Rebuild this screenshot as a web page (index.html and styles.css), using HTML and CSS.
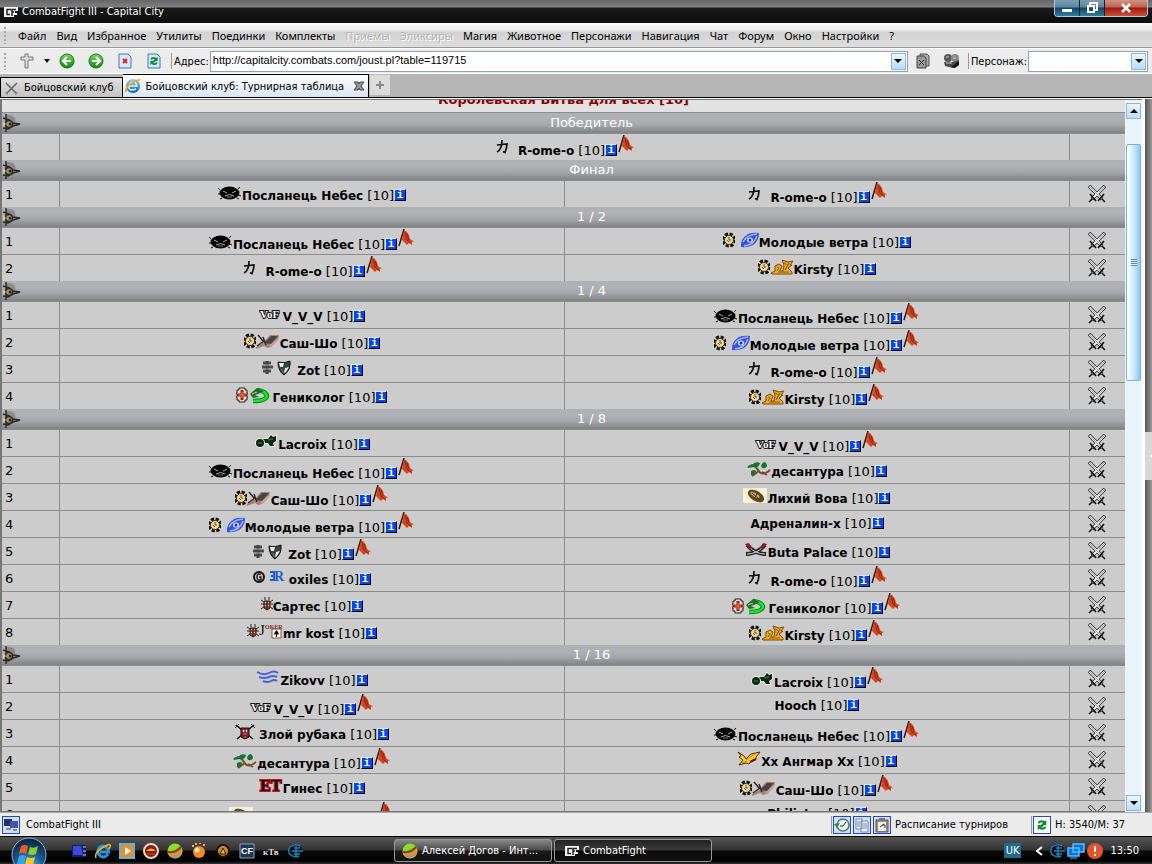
FILE: index.html
```
<!DOCTYPE html>
<html lang="ru">

<head>
  <meta charset="UTF-8" />
  <title>CombatFight III - Capital City</title>
  <link rel="stylesheet" href="styles.css">
</head>

<body>
  <svg class="gradients" aria-hidden="true">
    <defs>
      <linearGradient id="g-green" x1="0" y1="0" x2="0" y2="1"><stop offset="0" stop-color="#7ed957"/><stop offset="1" stop-color="#0c8a12"/></linearGradient>
      <linearGradient id="g-blue" x1="0" y1="0" x2="0" y2="1"><stop offset="0" stop-color="#8fd0f5"/><stop offset="1" stop-color="#0a5fb8"/></linearGradient>
      <radialGradient id="g-orb" cx=".5" cy=".85" r=".8"><stop offset="0" stop-color="#3fc4ee"/><stop offset=".5" stop-color="#1c5c96"/><stop offset="1" stop-color="#0b2440"/></radialGradient>
    </defs>
  </svg>

  <svg class="sprite" aria-hidden="true">
    <!-- clans -->
    <symbol id="c-sad" viewBox="0 0 24 17">
      <ellipse cx="11.500" cy="8" rx="10" ry="6.500" fill="#050505"/>
      <path d="M2 5L0 3M20 4l2-2M0 9h3M20 10l3 1M4 13l-2 1M19 13l2 1" stroke="#050505"/>
      <path d="M5 6l4 2M18 6l-4 2M7 11q4.500-3 9 0" fill="none" stroke="#aaa"/>
      <path d="M9 12h5" stroke="#777"/>
    </symbol>
    <symbol id="c-ka" viewBox="0 0 24 17">
      <path d="M3 5l10-1c0 3-1 6-2 8.500l-2-1M8 0c0 6-1 10-5 12" fill="none" stroke="#111" stroke-width="1.700"/>
    </symbol>
    <symbol id="c-vof" viewBox="0 0 24 17">
      <text x="1" y="12" font-family="Liberation Serif" font-weight="bold" font-size="11" fill="#fff" stroke="#111" stroke-width="2" paint-order="stroke">VoF</text>
    </symbol>
    <symbol id="c-feather" viewBox="0 0 24 17">
      <path d="M0 14l7-4 7-8 9 0-1 5-7 7-4 1-3-2-8 3z" fill="#a88078"/>
      <path d="M8 10l7-7 7 0-7 8z" fill="#454545"/>
      <path d="M2 2l5 6M1 13l7-5M7 4l3 8" stroke="#3a2a26" stroke-width="1.500"/>
      <path d="M14 13l8-7" stroke="#d2a69c" stroke-width="1.500"/>
    </symbol>
    <symbol id="c-shield" viewBox="0 0 24 17">
      <path d="M5 2q6 2 12-1 1 9-6 14-6-4-6-13z" fill="#34443c" stroke="#111"/>
      <path d="M6 3l5 0-1 4H7zM12 8l4-1-3 5-2 1z" fill="#eee"/><path d="M8 9l3 4" stroke="#8f6aa0"/>
    </symbol>
    <symbol id="c-snake" viewBox="0 0 24 17">
      <path d="M5 14q13 0 14-5-1-5-10-6" fill="none" stroke="#0a8a14" stroke-width="4.500"/>
      <path d="M5 14q13 0 14-5-1-5-10-6" fill="none" stroke="#18e628" stroke-width="2.500"/>
      <path d="M2 7l7-6 7 3-6 3-3 1 4 2-6 1z" fill="#17702c"/>
      <path d="M4 7l5-2" stroke="#e8d040"/>
    </symbol>
    <symbol id="c-disc" viewBox="0 0 24 17">
      <path d="M6 15Q5 7 13 2q5-2 11-1 0 8-6 12-6 3-12 2z" fill="#3454e6"/>
      <path d="M8 10Q11 3 22 2M9 14Q19 13 22 4" fill="none" stroke="#a9b8ff" stroke-width="1.500"/>
      <ellipse cx="15" cy="8" rx="3" ry="2.500" fill="#dfe7ff"/><circle cx="15" cy="8" r="1.500" fill="#1c2db0"/>
    </symbol>
    <symbol id="c-griffon" viewBox="0 0 24 17">
      <path d="M1 14l4-2 0-5 4-2 3 2-2 5 3 0 1-6-2-5 6 2 5-1-3 4 2 0-4 3 4 4v2H2z" fill="#edaa1c" stroke="#7a4a08"/>
      <path d="M7 8l2 1-2 3M14 4l4 2-3 5M8 13h11M19 4l-4 7" stroke="#9a5c0c" fill="none"/>
    </symbol>
    <symbol id="c-cannon" viewBox="0 0 24 17">
      <g stroke="#e4efe2" stroke-width="2" paint-order="stroke" fill="#0d2812">
        <path d="M8 5h6l3-4 2 2 3-1v5l-3 2 1 3-4 0-2-3H9z"/><circle cx="6" cy="9" r="4"/>
      </g>
      <path d="M4 9h4M14 6l5-1" stroke="#2f6a38" stroke-width="1.500"/>
    </symbol>
    <symbol id="c-leaf" viewBox="0 0 24 17">
      <path d="M1 6q6-4 10 3t12 0M12 10l-7 5M15 11l5 3" fill="none" stroke="#7b4a2c" stroke-width="2"/>
      <path d="M5 4q3-4 8-2-1 5-6 4zM14 5q1-4 4-4 4 4 0 6-3 1-4-2zM4 10q4-2 5 0-1 5-5 4zM0 7l5-4 2 3z" fill="#12733b"/>
    </symbol>
    <symbol id="c-egg" viewBox="0 0 24 17">
      <path d="M0 0h24v15H0z" fill="#f5f0d8"/>
      <ellipse cx="13" cy="8" rx="9" ry="5" transform="rotate(32 13 8)" fill="#5f481c"/>
      <ellipse cx="12" cy="7" rx="5" ry="2" transform="rotate(32 12 7)" fill="#c9b06a"/>
      <path d="M9 5l7 6M15 4l-4 7" stroke="#3b2a0c"/>
    </symbol>
    <symbol id="c-sabres" viewBox="0 0 24 17">
      <path d="M3 3q8 9 19 9M21 3Q13 12 2 12" fill="none" stroke="#222" stroke-width="4"/>
      <path d="M5 5q7 7 16 7M19 5Q12 12 3 12" fill="none" stroke="#ddd"/>
      <path d="M1 2l4-1 3 5-3 1zM23 2l-4-1-3 5 3 1z" fill="#8a1c25"/>
    </symbol>
    <symbol id="c-r" viewBox="0 0 24 17">
      <text x="9" y="12" font-family="Liberation Serif" font-weight="bold" font-size="14" fill="#1e5fd0">R</text>
      <path d="M5 3h5M6 7h4M5 11h5M9 3v8" stroke="#1e5fd0" stroke-width="2"/>
    </symbol>
    <symbol id="c-joker" viewBox="0 0 24 17">
      <path d="M13 6h9v9h-9z" fill="#fff" stroke="#8a4a3a"/><path d="M17.500 7q5 6 0 4-5 2 0-4zM17 11h1v3h-1z" fill="#111"/>
      <text x="0" y="12" font-family="Liberation Serif" font-size="15" fill="#111">J</text>
      <text x="6" y="6" font-family="Liberation Serif" font-weight="bold" font-size="6" fill="#7c2d20">OKER</text>
    </symbol>
    <symbol id="c-wing" viewBox="0 0 24 17">
      <path d="M1 2q7 4 12 1t9 0M3 7q6 2 10 0t8 0M7 11q5 2 8 0t6 0" fill="none" stroke="#4a63d8" stroke-width="2"/>
    </symbol>
    <symbol id="c-bug" viewBox="0 0 24 17">
      <path d="M1 1l17 14M19 1L2 15" stroke="#111" stroke-width="1.500"/>
      <path d="M0 4l4-4M20 4l-4-4" stroke="#333"/>
      <path d="M6 4h8v9l-4 2-4-2z" fill="#8d1626" stroke="#111"/><path d="M8 6h1v2H8zM11 6h1v2h-1zM8 10h4M10 12v2" fill="#eee" stroke="#ddd" stroke-width=".5"/>
    </symbol>
    <symbol id="c-et" viewBox="0 0 24 17">
      <text x="1" y="13" font-family="Liberation Serif" font-weight="bold" font-size="16" fill="#111" stroke="#c0161c" stroke-width="2" paint-order="stroke">ET</text>
    </symbol>
    <symbol id="c-hawk" viewBox="0 0 24 17">
      <path d="M1 1l6 4 2 3 5-5 9-2-4 5 0 2-5 2-2 3-3-1-7 2 4-5-4-3 2-1z" fill="#ffd21c" stroke="#5a2504"/>
      <path d="M9 9l9-6M5 12l5-2" stroke="#c77a08"/><path d="M13 11l6-3" stroke="#6a1408" stroke-width="2"/>
    </symbol>

    <!-- alignments -->
    <symbol id="a-clock" viewBox="0 0 12 17">
      <circle cx="6" cy="8" r="5.500" fill="none" stroke="#111" stroke-width="4" stroke-dasharray="2.900 1.400"/>
      <circle cx="6" cy="8" r="4.500" fill="#ead9a6" stroke="#4e3810"/>
      <path d="M6 5v3h2M4 8l2 2" fill="none" stroke="#6b4e1a"/>
    </symbol>
    <symbol id="a-grey" viewBox="0 0 12 17">
      <path d="M2 3h8M1 7h11M2 11h8" stroke="#4a4a4a" stroke-width="3"/>
      <path d="M6 1v13" stroke="#444" stroke-width="3"/><path d="M3 5h7M3 9h7" stroke="#999"/>
    </symbol>
    <symbol id="a-cross" viewBox="0 0 12 17">
      <path d="M3 1h6v2h2v3h1v4h-1v3H9v2H3v-2H1v-3H0V6h1V3h2z" fill="#e8d8d0" stroke="#222"/>
      <path d="M6 3v10M1 8h10" stroke="#a4201a" stroke-width="3"/><path d="M6 5v6M3 8h6" stroke="#f08a2a"/>
    </symbol>
    <symbol id="a-g" viewBox="0 0 12 17">
      <circle cx="6" cy="8" r="5" fill="#ccc" stroke="#111" stroke-width="2"/>
      <path d="M8 5.500q-4-2-4 2.500t4 2.500V8H6" fill="none" stroke="#222" stroke-width="1.500"/>
    </symbol>
    <symbol id="a-beetle" viewBox="0 0 12 17">
      <path d="M0 4l3 2M12 4L9 6M0 8h12M0 13l3-2M12 13l-3-2M4 1v3M8 1v3" stroke="#222"/>
      <path d="M3 5h6v7l-3 2-3-2z" fill="#b0401c" stroke="#222"/><path d="M4.500 6v6M7.500 6v6" stroke="#fff" stroke-dasharray="1 2"/><path d="M6 5v9" stroke="#222"/>
    </symbol>

    <symbol id="flag" viewBox="0 0 18 20">
      <path d="M7 0L2 17" stroke="#2d1a12" stroke-width="1.500"/>
      <path d="M7 1q3 1 5 5l1 4q2 2 4 2l-2 1v3l-3-2-2 2-2-2-3-3z" fill="#d8431f"/>
      <path d="M8 3l2 8 4 3M10 5l2 6" fill="none" stroke="#8d2410"/>
    </symbol>
    <symbol id="swords" viewBox="0 0 18 18">
      <path d="M1 1l13 13M17 1L4 14" stroke="#222" stroke-width="3.600"/>
      <path d="M1.500 1.500l12 12M16.500 1.500l-12 12" stroke="#f2f2f2" stroke-width="2.200"/>
      <path d="M2 2l11 11M16 2l-5 5" stroke="#777" stroke-width=".6"/>
      <path d="M2 9l6 7M16 9l-6 7M1 17l3-3M17 17l-3-3" stroke="#111" stroke-width="1.600"/>
    </symbol>
    <symbol id="ornament" viewBox="0 0 20 20">
      <path d="M4 2q11-1 9 8-2 7-9 7z" fill="#8c8a86"/>
      <path d="M1 5l6 2 4 3 7 1-7 2-5 3-5-1M4 1v18" fill="none" stroke="#2c2a24" stroke-width="1.500"/>
      <circle cx="7" cy="11" r="3.500" fill="#a39a78" stroke="#2b281f" stroke-width="1.500"/><circle cx="8" cy="11" r="1.500" fill="#2b281f"/>
      <path d="M1 9l3 2-3 3z" fill="#d9cf9c"/>
    </symbol>

    <!-- program icons -->
    <symbol id="cf" viewBox="0 0 14 12">
      <path d="M0 1h14v4h-3v2h2v2h-3v2H0z" fill="#f4f4f4"/>
      <path d="M7 3.500H3v5h3M8 10V3.500h4M8 6h2" fill="none" stroke="#222" stroke-width="1.500"/>
    </symbol>
    <symbol id="ie" viewBox="0 0 16 16">
      <path d="M13 11q-2 3-5 3-5-1-5-6 1-5 5-5 5 0 5.500 6H5" fill="none" stroke="#2a94e4" stroke-width="3"/>
      <path d="M1 15Q-1 10 7 5t8-3q1 1-1 4" fill="none" stroke="#f0b429" stroke-width="1.500"/>
    </symbol>
    <symbol id="ball" viewBox="0 0 16 16">
      <circle cx="8" cy="8" r="7.500" fill="#8edb2c"/>
      <path d="M.5 9q8 1 14-5 2 5-1 9-5 4-10 1-3-2-3-5z" fill="#f1931d"/>
      <path d="M1 9q8 1 13-5" fill="none" stroke="#6a4b12" stroke-width="2"/><path d="M2 12q6 2 12-3-1 5-6 6-4 0-6-3z" fill="#999"/>
    </symbol>
    <symbol id="refresh" viewBox="0 0 14 14">
      <path d="M3 5q1-3 5-2l2 1-4 5M11 9q-1 3-5 2l-2-1" fill="none" stroke="#0b8a2c" stroke-width="2.500"/>
      <path d="M12 1v6H7zM2 13V7h5z" fill="#0b8a2c"/>
    </symbol>
    <symbol id="net" viewBox="0 0 16 16">
      <circle cx="8" cy="8" r="7" fill="#050b12"/>
      <path d="M13 3Q8 0 3 4q-3 5 1 8 4 3 8 1M5 8h11M7 5h6M7 11h6M9 3v10" fill="none" stroke="#1f7fb5" stroke-width="1.500"/>
    </symbol>
  </svg>

  <header class="titlebar">
    <svg class="title-icon"><use href="#cf"/></svg>
    <h1>CombatFight III - Capital City</h1>
    <div class="win-buttons">
      <button aria-label="Свернуть"><svg width="12" height="12"><path d="M1 7h10v3H1z" fill="#fff"/></svg></button>
      <button aria-label="Восстановить"><svg width="12" height="12"><path d="M4 3V1h7v7H9M2 4h6v6H2z" fill="none" stroke="#fff" stroke-width="2"/></svg></button>
      <button class="close" aria-label="Закрыть"><svg width="12" height="12"><path d="M2 2l8 8M10 2l-8 8" stroke="#fff" stroke-width="2.500"/></svg></button>
    </div>
  </header>

  <nav class="menubar">
    <span class="grip"></span>
    <button>Файл</button>
    <button>Вид</button>
    <button>Избранное</button>
    <button>Утилиты</button>
    <button>Поединки</button>
    <button>Комплекты</button>
    <button disabled>Приёмы</button>
    <button disabled>Эликсиры</button>
    <button>Магия</button>
    <button>Животное</button>
    <button>Персонажи</button>
    <button>Навигация</button>
    <button>Чат</button>
    <button>Форум</button>
    <button>Окно</button>
    <button>Настройки</button>
    <button>?</button>
  </nav>

  <div class="toolbar">
    <span class="grip"></span>
    <div class="tools">
      <button class="cross" aria-label="Бой"><svg width="14" height="16"><path d="M5 1h3v3h5v3H8v8H5V7H1V4h4z" fill="#ddd" stroke="#777"/></svg><svg width="6" height="4"><path d="M0 0h6L3 4z" fill="#111"/></svg></button>
      <button aria-label="Назад"><svg width="16" height="16"><circle cx="8" cy="8" r="7" fill="url(#g-green)" stroke="#0c7a14"/><path d="M12 8H5M8 4L4 8l4 4" fill="none" stroke="#fff" stroke-width="2"/></svg></button>
      <button aria-label="Вперёд"><svg width="16" height="16"><circle cx="8" cy="8" r="7" fill="url(#g-green)" stroke="#0c7a14"/><path d="M4 8h7M8 4l4 4-4 4" fill="none" stroke="#fff" stroke-width="2"/></svg></button>
      <button aria-label="Остановить"><svg width="16" height="16"><path d="M2 1h9l3 3v11H2z" fill="#d7e8fb" stroke="#3d78bf"/><path d="M6 6l4 4M10 6l-4 4" stroke="#e02418" stroke-width="2"/></svg></button>
      <button aria-label="Обновить"><svg width="16" height="16"><path d="M2 1h9l3 3v11H2z" fill="#d7e8fb" stroke="#3d78bf"/><svg x="3" y="3" width="10" height="10"><use href="#refresh"/></svg></svg></button>
    </div>
    <label for="address">Адрес:</label>
    <div class="combo address">
      <input id="address" type="text" value="http://capitalcity.combats.com/joust.pl?table=119715">
      <button class="drop" aria-label="История адресов"></button>
    </div>
    <div class="tools small">
      <button aria-label="Закрыть все"><svg width="14" height="16"><path d="M4 1h7l2 2v10H4z" fill="#aaa" stroke="#555"/><path d="M1 3h7l2 2v10H1z" fill="#999" stroke="#444"/><path d="M3 7l5 5M8 7l-5 5" stroke="#333"/></svg></button>
      <button aria-label="Друзья"><svg width="17" height="16"><circle cx="5" cy="5" r="4" fill="#555"/><circle cx="12" cy="5" r="4" fill="#888"/><path d="M1 9h9l6-2v4l-6 4-8-2z" fill="#4a4a4a"/><path d="M8 14l8-6v4l-4 3z" fill="#111"/><path d="M3 4h3M10 5h3M3 10h6" stroke="#ccc"/></svg></button>
    </div>
    <label for="char">Персонаж:</label>
    <div class="combo char">
      <select id="char"><option></option></select>
      <span class="drop"></span>
    </div>
  </div>

  <div class="tabs" role="tablist">
    <button class="tab" role="tab"><svg width="13" height="14"><path d="M1 2l11 11M12 2L1 13" stroke="#666" stroke-width="1.500"/><path d="M0 11l3 3M13 11l-3 3" stroke="#999"/></svg>Бойцовский клуб</button>
    <button class="tab active" role="tab" aria-selected="true"><svg width="16" height="16"><circle cx="8" cy="8" r="7" fill="url(#g-blue)"/><path d="M4 8h8q-1-4-4-4t-4 4 4 4l3-1" fill="none" stroke="#e4f4ff" stroke-width="1.500"/><path d="M1 14Q0 9 7 5t8-3" fill="none" stroke="#e9a92a" stroke-width="2"/></svg>Бойцовский клуб: Турнирная таблица<svg class="tab-close" width="12" height="10"><path d="M1 1h4l1 2 1-2h4L8 5l3 4H7L6 7 5 9H1l3-4z" fill="#999" stroke="#444"/></svg></button>
    <button class="new-tab" aria-label="Новая вкладка"><svg width="10" height="10"><path d="M5 1v8M1 5h8" stroke="#888" stroke-width="2"/></svg></button>
  </div>

  <main class="view">
    <div class="page">
      <h3>Королевская Битва для всех [10]</h3>
      <table>
        <colgroup><col class="num"><col><col><col class="log"></colgroup>
        <tr class="stage"><th colspan="4"><svg class="orn"><use href="#ornament"/></svg>Победитель</th></tr>
        <tr>
          <td>1</td>
          <td colspan="2"><svg class="clan"><use href="#c-ka"/></svg><b>R-ome-o</b> [10]<a class="inf" href="#">i</a><svg class="flag"><use href="#flag"/></svg></td>
          <td></td>
        </tr>
        <tr class="stage"><th colspan="4"><svg class="orn"><use href="#ornament"/></svg>Финал</th></tr>
        <tr>
          <td>1</td>
          <td><svg class="clan"><use href="#c-sad"/></svg><b>Посланець Небес</b> [10]<a class="inf" href="#">i</a></td>
          <td><svg class="clan"><use href="#c-ka"/></svg><b>R-ome-o</b> [10]<a class="inf" href="#">i</a><svg class="flag"><use href="#flag"/></svg></td>
          <td><svg class="swords"><use href="#swords"/></svg></td>
        </tr>
        <tr class="stage"><th colspan="4"><svg class="orn"><use href="#ornament"/></svg>1 / 2</th></tr>
        <tr>
          <td>1</td>
          <td><svg class="clan"><use href="#c-sad"/></svg><b>Посланець Небес</b> [10]<a class="inf" href="#">i</a><svg class="flag"><use href="#flag"/></svg></td>
          <td><svg class="align"><use href="#a-clock"/></svg><svg class="clan"><use href="#c-disc"/></svg><b>Молодые ветра</b> [10]<a class="inf" href="#">i</a></td>
          <td><svg class="swords"><use href="#swords"/></svg></td>
        </tr>
        <tr>
          <td>2</td>
          <td><svg class="clan"><use href="#c-ka"/></svg><b>R-ome-o</b> [10]<a class="inf" href="#">i</a><svg class="flag"><use href="#flag"/></svg></td>
          <td><svg class="align"><use href="#a-clock"/></svg><svg class="clan"><use href="#c-griffon"/></svg><b>Kirsty</b> [10]<a class="inf" href="#">i</a></td>
          <td><svg class="swords"><use href="#swords"/></svg></td>
        </tr>
        <tr class="stage"><th colspan="4"><svg class="orn"><use href="#ornament"/></svg>1 / 4</th></tr>
        <tr>
          <td>1</td>
          <td><svg class="clan"><use href="#c-vof"/></svg><b>V_V_V</b> [10]<a class="inf" href="#">i</a></td>
          <td><svg class="clan"><use href="#c-sad"/></svg><b>Посланець Небес</b> [10]<a class="inf" href="#">i</a><svg class="flag"><use href="#flag"/></svg></td>
          <td><svg class="swords"><use href="#swords"/></svg></td>
        </tr>
        <tr>
          <td>2</td>
          <td><svg class="align"><use href="#a-clock"/></svg><svg class="clan"><use href="#c-feather"/></svg><b>Саш-Шо</b> [10]<a class="inf" href="#">i</a></td>
          <td><svg class="align"><use href="#a-clock"/></svg><svg class="clan"><use href="#c-disc"/></svg><b>Молодые ветра</b> [10]<a class="inf" href="#">i</a><svg class="flag"><use href="#flag"/></svg></td>
          <td><svg class="swords"><use href="#swords"/></svg></td>
        </tr>
        <tr>
          <td>3</td>
          <td><svg class="align"><use href="#a-grey"/></svg><svg class="clan"><use href="#c-shield"/></svg><b>Zot</b> [10]<a class="inf" href="#">i</a></td>
          <td><svg class="clan"><use href="#c-ka"/></svg><b>R-ome-o</b> [10]<a class="inf" href="#">i</a><svg class="flag"><use href="#flag"/></svg></td>
          <td><svg class="swords"><use href="#swords"/></svg></td>
        </tr>
        <tr>
          <td>4</td>
          <td><svg class="align"><use href="#a-cross"/></svg><svg class="clan"><use href="#c-snake"/></svg><b>Гениколог</b> [10]<a class="inf" href="#">i</a></td>
          <td><svg class="align"><use href="#a-clock"/></svg><svg class="clan"><use href="#c-griffon"/></svg><b>Kirsty</b> [10]<a class="inf" href="#">i</a><svg class="flag"><use href="#flag"/></svg></td>
          <td><svg class="swords"><use href="#swords"/></svg></td>
        </tr>
        <tr class="stage"><th colspan="4"><svg class="orn"><use href="#ornament"/></svg>1 / 8</th></tr>
        <tr>
          <td>1</td>
          <td><svg class="clan"><use href="#c-cannon"/></svg><b>Lacroix</b> [10]<a class="inf" href="#">i</a></td>
          <td><svg class="clan"><use href="#c-vof"/></svg><b>V_V_V</b> [10]<a class="inf" href="#">i</a><svg class="flag"><use href="#flag"/></svg></td>
          <td><svg class="swords"><use href="#swords"/></svg></td>
        </tr>
        <tr>
          <td>2</td>
          <td><svg class="clan"><use href="#c-sad"/></svg><b>Посланець Небес</b> [10]<a class="inf" href="#">i</a><svg class="flag"><use href="#flag"/></svg></td>
          <td><svg class="clan"><use href="#c-leaf"/></svg><b>десантура</b> [10]<a class="inf" href="#">i</a></td>
          <td><svg class="swords"><use href="#swords"/></svg></td>
        </tr>
        <tr>
          <td>3</td>
          <td><svg class="align"><use href="#a-clock"/></svg><svg class="clan"><use href="#c-feather"/></svg><b>Саш-Шо</b> [10]<a class="inf" href="#">i</a><svg class="flag"><use href="#flag"/></svg></td>
          <td><svg class="clan"><use href="#c-egg"/></svg><b>Лихий Вова</b> [10]<a class="inf" href="#">i</a></td>
          <td><svg class="swords"><use href="#swords"/></svg></td>
        </tr>
        <tr>
          <td>4</td>
          <td><svg class="align"><use href="#a-clock"/></svg><svg class="clan"><use href="#c-disc"/></svg><b>Молодые ветра</b> [10]<a class="inf" href="#">i</a><svg class="flag"><use href="#flag"/></svg></td>
          <td><b>Адреналин-х</b> [10]<a class="inf" href="#">i</a></td>
          <td><svg class="swords"><use href="#swords"/></svg></td>
        </tr>
        <tr>
          <td>5</td>
          <td><svg class="align"><use href="#a-grey"/></svg><svg class="clan"><use href="#c-shield"/></svg><b>Zot</b> [10]<a class="inf" href="#">i</a><svg class="flag"><use href="#flag"/></svg></td>
          <td><svg class="clan"><use href="#c-sabres"/></svg><b>Buta Palace</b> [10]<a class="inf" href="#">i</a></td>
          <td><svg class="swords"><use href="#swords"/></svg></td>
        </tr>
        <tr>
          <td>6</td>
          <td><svg class="align"><use href="#a-g"/></svg><svg class="clan"><use href="#c-r"/></svg><b>oxiles</b> [10]<a class="inf" href="#">i</a></td>
          <td><svg class="clan"><use href="#c-ka"/></svg><b>R-ome-o</b> [10]<a class="inf" href="#">i</a><svg class="flag"><use href="#flag"/></svg></td>
          <td><svg class="swords"><use href="#swords"/></svg></td>
        </tr>
        <tr>
          <td>7</td>
          <td><svg class="align"><use href="#a-beetle"/></svg><b>Сартес</b> [10]<a class="inf" href="#">i</a></td>
          <td><svg class="align"><use href="#a-cross"/></svg><svg class="clan"><use href="#c-snake"/></svg><b>Гениколог</b> [10]<a class="inf" href="#">i</a><svg class="flag"><use href="#flag"/></svg></td>
          <td><svg class="swords"><use href="#swords"/></svg></td>
        </tr>
        <tr>
          <td>8</td>
          <td><svg class="align"><use href="#a-beetle"/></svg><svg class="clan"><use href="#c-joker"/></svg><b>mr kost</b> [10]<a class="inf" href="#">i</a></td>
          <td><svg class="align"><use href="#a-clock"/></svg><svg class="clan"><use href="#c-griffon"/></svg><b>Kirsty</b> [10]<a class="inf" href="#">i</a><svg class="flag"><use href="#flag"/></svg></td>
          <td><svg class="swords"><use href="#swords"/></svg></td>
        </tr>
        <tr class="stage"><th colspan="4"><svg class="orn"><use href="#ornament"/></svg>1 / 16</th></tr>
        <tr>
          <td>1</td>
          <td><svg class="clan"><use href="#c-wing"/></svg><b>Zikovv</b> [10]<a class="inf" href="#">i</a></td>
          <td><svg class="clan"><use href="#c-cannon"/></svg><b>Lacroix</b> [10]<a class="inf" href="#">i</a><svg class="flag"><use href="#flag"/></svg></td>
          <td><svg class="swords"><use href="#swords"/></svg></td>
        </tr>
        <tr>
          <td>2</td>
          <td><svg class="clan"><use href="#c-vof"/></svg><b>V_V_V</b> [10]<a class="inf" href="#">i</a><svg class="flag"><use href="#flag"/></svg></td>
          <td><b>Hooch</b> [10]<a class="inf" href="#">i</a></td>
          <td><svg class="swords"><use href="#swords"/></svg></td>
        </tr>
        <tr>
          <td>3</td>
          <td><svg class="clan"><use href="#c-bug"/></svg><b>Злой рубака</b> [10]<a class="inf" href="#">i</a></td>
          <td><svg class="clan"><use href="#c-sad"/></svg><b>Посланець Небес</b> [10]<a class="inf" href="#">i</a><svg class="flag"><use href="#flag"/></svg></td>
          <td><svg class="swords"><use href="#swords"/></svg></td>
        </tr>
        <tr>
          <td>4</td>
          <td><svg class="clan"><use href="#c-leaf"/></svg><b>десантура</b> [10]<a class="inf" href="#">i</a><svg class="flag"><use href="#flag"/></svg></td>
          <td><svg class="clan"><use href="#c-hawk"/></svg><b>Хх Ангмар Хх</b> [10]<a class="inf" href="#">i</a></td>
          <td><svg class="swords"><use href="#swords"/></svg></td>
        </tr>
        <tr>
          <td>5</td>
          <td><svg class="clan"><use href="#c-et"/></svg><b>Гинес</b> [10]<a class="inf" href="#">i</a></td>
          <td><svg class="align"><use href="#a-clock"/></svg><svg class="clan"><use href="#c-feather"/></svg><b>Саш-Шо</b> [10]<a class="inf" href="#">i</a><svg class="flag"><use href="#flag"/></svg></td>
          <td><svg class="swords"><use href="#swords"/></svg></td>
        </tr>
        <tr>
          <td>6</td>
          <td><svg class="clan"><use href="#c-egg"/></svg><b>Лихий Вова</b> [10]<a class="inf" href="#">i</a><svg class="flag"><use href="#flag"/></svg></td>
          <td><b>Philister</b> [10]<a class="inf" href="#">i</a></td>
          <td><svg class="swords"><use href="#swords"/></svg></td>
        </tr>
      </table>
    </div>
    <div class="scrollbar">
      <button class="arrow up" aria-label="Вверх"></button>
      <div class="track"><div class="thumb"></div></div>
      <button class="arrow down" aria-label="Вниз"></button>
    </div>
    <div class="splitter"><span></span></div>
  </main>

  <footer class="statusbar">
    <span class="sbox"><svg width="16" height="16"><path d="M1 2h8v7H1z" fill="#22306e"/><path d="M7 4h8v7H7z" fill="#4456a8"/><path d="M3 12h5M10 13h4" stroke="#889" stroke-width="2"/></svg></span>
    <span class="program">CombatFight III</span>
    <div class="panel schedule">
      <button class="sbox" aria-label="История"><svg width="16" height="16"><circle cx="9" cy="8" r="6" fill="#e7f2e8" stroke="#557a6a" stroke-width="1.500"/><path d="M12 5L9 9H6" fill="none" stroke="#333"/><path d="M0 7l6-1-3 5z" fill="#16963a"/></svg></button>
      <button class="sbox" aria-label="Журнал"><svg width="16" height="16"><path d="M2 2h6v10H2zM7 4h7v11H7z" fill="#eef5ff" stroke="#7288a8"/><path d="M3 5h3M3 7h3M3 9h3M9 7h4M9 9h4M9 11h4" stroke="#7288a8"/></svg></button>
      <button class="sbox" aria-label="Буфер"><svg width="16" height="16"><path d="M2 3h12v12H2z" fill="#a5916c" stroke="#555"/><path d="M4 5h8v9H4z" fill="#e8eef0"/><path d="M5 1h6v3H5z" fill="#777"/><path d="M6 10l4-3M8 8h3v3" stroke="#444" fill="none"/></svg></button>
      <span>Расписание турниров</span>
    </div>
    <div class="panel memory">
      <button class="sbox white" aria-label="Обновить"><svg width="12" height="12"><use href="#refresh"/></svg></button>
      <span>H: 3540/M: 37</span>
    </div>
  </footer>

  <div class="taskbar">
    <button class="start" aria-label="Пуск">
      <svg width="36" height="28"><circle cx="18" cy="18" r="17" fill="url(#g-orb)" stroke="#8fb6cf"/>
        <path d="M10 9q4-2 7 0l-2 8q-3-2-7 0z" fill="#ee5a24"/><path d="M19 10q4 2 8-1l-2 8q-4 2-8 0z" fill="#8ccc2d"/>
        <path d="M8 19q3-2 7 0l-2 8H6z" fill="#39a0ea"/><path d="M16 20q4 2 8 0l-2 8h-8z" fill="#fbc41e"/></svg>
    </button>
    <div class="quick">
      <button aria-label="Рабочий стол"><svg width="16" height="16"><path d="M1 2h14v12H1z" fill="#15205f"/><path d="M2 12V3h8l2 9z" fill="#3a4ae0"/><path d="M12 4h3M12 8h3M12 12h3" stroke="#ccc"/></svg></button>
      <button aria-label="Internet Explorer"><svg width="16" height="16"><use href="#ie"/></svg></button>
      <button aria-label="Плеер"><svg width="16" height="16"><path d="M1 1h14v14H1z" fill="#f28a1e" stroke="#54b7ea" stroke-width="2"/><path d="M6 4l6 4-6 4z" fill="#fff"/></svg></button>
      <button aria-label="Диск"><svg width="16" height="16"><circle cx="8" cy="8" r="7" fill="#8a1a16" stroke="#e8d8c8" stroke-width="2"/><path d="M3 8q5-5 10 0z" fill="#e8b83c"/><path d="M4 11h8" stroke="#d5502c"/></svg></button>
      <button aria-label="Браузер"><svg width="16" height="16"><use href="#ball"/></svg></button>
      <button aria-label="GOM"><svg width="16" height="16"><circle cx="8" cy="9" r="6" fill="#f58a1c"/><circle cx="6" cy="7" r="2.500" fill="#ffe2b0"/><path d="M1 3h2M4 1h2M8 0h2M12 2h2" stroke="#ffb14a" stroke-width="2"/></svg></button>
      <button aria-label="AIMP"><svg width="16" height="16"><circle cx="8" cy="8" r="6" fill="#d18a24" stroke="#1a1208" stroke-width="2"/><path d="M8 5l3 6H5z" fill="#e8b45c" stroke="#2a1a08"/></svg></button>
      <button aria-label="CF"><svg width="16" height="16"><path d="M1 1h14v14H1z" fill="#1e3550" stroke="#8aa2b8"/><text x="2" y="11" font-family="Liberation Sans" font-size="9" font-weight="bold" fill="#fff">CF</text></svg></button>
      <button aria-label="кТв"><svg width="16" height="16"><text x="0" y="12" font-family="Liberation Serif" font-size="9" font-weight="bold" fill="#ddd">кТв</text></svg></button>
      <button aria-label="Сеть"><svg width="16" height="16"><use href="#net"/></svg></button>
    </div>
    <div class="tasks">
      <button><svg width="16" height="16"><use href="#ball"/></svg>Алексей Догов - Инт...</button>
      <button class="current"><svg width="14" height="12"><use href="#cf"/></svg>CombatFight</button>
    </div>
    <div class="tray">
      <span class="lang">UK</span>
      <svg class="chevron" width="8" height="10"><path d="M7 1L2 5l5 4" fill="none" stroke="#fff" stroke-width="2"/></svg>
      <svg width="16" height="16"><use href="#net"/></svg>
      <svg width="18" height="16"><path d="M6 1h11v8H6zM1 5h11v8H1z" fill="#1270d8" stroke="#4fc0ff" stroke-width="1.500"/><path d="M3 15h7" stroke="#4fc0ff"/></svg>
      <svg width="16" height="16"><circle cx="8" cy="8" r="8" fill="#e8512a"/><path d="M8 3v6M8 11v2" stroke="#fff" stroke-width="2"/></svg>
      <time>13:50</time>
    </div>
  </div>
</body>

</html>
```
FILE: styles.css
```
* {
  box-sizing: border-box;
}

body {
  display: flex;
  flex-direction: column;
  height: 100vh;
  margin: 0;
  overflow: hidden;
  background: #b6b6b6;
  color: #000;
  font-family: 'DejaVu Sans Condensed', 'DejaVu Sans', sans-serif;
  font-size: 11px;
}

button,
input,
select {
  font: inherit;
  color: inherit;
  margin: 0;
  padding: 0;
  border: none;
  background: none;
}

button {
  white-space: nowrap;
}

.sprite {
  display: none;
}

.gradients {
  position: absolute;
  width: 0;
  height: 0;
}

/* title */
.titlebar {
  display: flex;
  flex: none;
  align-items: center;
  height: 23px;
  padding-left: 4px;
  color: #fff;
  background: linear-gradient(#666, #808080 7px, #1a1a1a 8px, #0d0d0d);
}

.title-icon {
  width: 14px;
  height: 12px;
}

.titlebar h1 {
  flex: 1;
  margin: 0 0 0 4px;
  font-size: 11px;
  font-weight: normal;
}

.win-buttons {
  display: flex;
  align-self: flex-start;
  height: 17px;
  margin-right: 4px;
  border: 1px solid #b5c9d4;
  border-top: none;
  border-radius: 0 0 4px 4px;
  overflow: hidden;
}

.win-buttons button {
  display: flex;
  align-items: center;
  justify-content: center;
  width: 25px;
  border-right: 1px solid #123;
  background: linear-gradient(#7d9db0, #5c87a0 7px, #14455f 8px, #2d7fa3);
}

.win-buttons .close {
  width: 42px;
  border-right: none;
  background: linear-gradient(#d09484, #c0604e 7px, #9c1c10 8px, #c8503c);
}

/* menu */
.menubar {
  display: flex;
  flex: none;
  align-items: center;
  gap: 10px;
  height: 25px;
  border-bottom: 1px solid #999;
  background: linear-gradient(#fafafa, #e6e6e6 8px, #d2d2d2 9px, #dedede);
  font-family: 'Noto Sans', sans-serif;
  font-size: 11px;
}

.menubar button:disabled {
  color: #b4b4b4;
  text-shadow: 1px 1px #fff;
}

.grip {
  width: 4px;
  height: 18px;
  margin: 0 5px 0 3px;
  background: radial-gradient(circle, #aaa 1px, transparent 1px) 0 0 / 4px 4px;
}

.menubar .grip {
  margin-right: 1px;
}

/* toolbar */
.toolbar {
  display: flex;
  flex: none;
  align-items: center;
  height: 26px;
  padding-right: 4px;
  border-top: 1px solid #fff;
  border-bottom: 1px solid #fff;
  background: #ececec;
}

.tools {
  display: flex;
  align-items: center;
  gap: 13px;
  padding: 0 9px 0 8px;
  margin-right: 2px;
  border-right: 1px solid #999;
}

.tools svg {
  display: block;
}

.tools .cross {
  display: flex;
  align-items: center;
  gap: 10px;
  margin-right: -4px;
}

.tools.small {
  padding: 0 8px;
}

.combo {
  display: flex;
  height: 21px;
  margin-left: 1px;
  padding: 1px;
  border: 1px solid #8fa3b5;
  background: #fff;
}

.address {
  flex: 1;
}

.combo input,
.combo select {
  flex: 1;
  min-width: 0;
  padding-left: 1px;
  appearance: none;
  outline: none;
}

.combo input {
  padding-bottom: 2px;
  font-family: 'Liberation Sans', sans-serif;
}

.char {
  width: 120px;
}

.drop,
.arrow {
  display: flex;
  align-items: center;
  justify-content: center;
  width: 15px;
  border: 1px solid #8fb5dd;
  background: linear-gradient(#eef7ff, #b8dcf8);
}

.drop::after,
.arrow::after {
  content: '';
  border: 4px solid transparent;
  border-top-color: #000;
  border-bottom: none;
}

/* tabs */
.tabs {
  display: flex;
  flex: none;
  align-items: flex-end;
  height: 24px;
  border-bottom: 1px solid #000;
}

.tab {
  display: flex;
  align-items: center;
  gap: 6px;
  height: 20px;
  padding: 0 8px 0 4px;
  border: 1px solid #000;
  border-bottom: none;
  background: linear-gradient(#e0e0e0, #c4c4c4);
}

.tab.active {
  gap: 5px;
  height: 23px;
  padding: 0 3px 0 2px;
  border-left: none;
  background: linear-gradient(#fff, #d9e4f3);
}

.tab-close {
  margin-left: 4px;
}

.new-tab {
  display: flex;
  align-items: center;
  justify-content: center;
  width: 20px;
  height: 20px;
  margin: 0 0 2px 1px;
  background: #dcdcdc;
}

/* tournament page */
.view {
  display: flex;
  flex: 1;
  min-height: 0;
  border-top: 1px solid #fff;
  background: #fff;
}

.page {
  flex: 1;
  min-width: 0;
  overflow: hidden;
  border: solid #777;
  border-width: 1px 0 1px 2px;
  background: #e2e2e2;
  font-family: 'DejaVu Sans', sans-serif;
  font-size: 13px;
}

/* page is scrolled down a little */
.page h3 {
  margin: -8px 0 4px;
  color: #8f0000;
  font-size: 13px;
  line-height: 16px;
  text-align: center;
}

.page table {
  width: 100%;
  table-layout: fixed;
  border-collapse: separate;
  border-spacing: 0;
  border-top: 1px solid #8c8c8c;
  background: #ccc;
}

.num {
  width: 58px;
}

.log {
  width: 55px;
}

.page th {
  position: relative;
  height: 20px;
  padding: 0 0 0 56px;
  background: linear-gradient(#b0b1b5 30%, #a6a7ab 60%, #808286);
  color: #fff;
  font-weight: normal;
  line-height: 20px;
}

.orn {
  position: absolute;
  top: 0;
  left: 0;
  width: 20px;
  height: 20px;
}

.page td {
  height: 27px;
  padding: 0;
  border-top: 1px solid #8c8c8c;
  border-right: 1px solid #8c8c8c;
  line-height: 16px;
  text-align: center;
  white-space: nowrap;
}

.page td b {
  font-size: 12px;
}

.page td:first-child {
  padding: 2px 0 0 3px;
  text-align: left;
}

.page td:last-child {
  border-right: none;
}

.align,
.clan {
  width: 12px;
  height: 17px;
  vertical-align: -2px;
}

.clan {
  width: 24px;
}

.flag {
  width: 18px;
  height: 20px;
}

.swords {
  width: 18px;
  height: 18px;
  vertical-align: middle;
}

.inf {
  display: inline-block;
  width: 12px;
  height: 12px;
  overflow: hidden;
  border: 1px solid;
  border-color: #dde6ff #000 #000 #dde6ff;
  background: #0a46f0;
  color: #fff;
  font-family: 'Liberation Mono', monospace;
  font-size: 11px;
  font-weight: bold;
  line-height: 10px;
  text-decoration: none;
  vertical-align: -1px;
}

/* scrollbar */
.scrollbar {
  display: flex;
  flex-direction: column;
  width: 17px;
  padding: 3px 1px 1px;
  border-top: 1px solid #777;
  background: #e9f4fb;
}

.arrow {
  height: 16px;
}

.arrow.up::after {
  border: 4px solid transparent;
  border-top: none;
  border-bottom-color: #000;
}

.track {
  flex: 1;
}

.thumb {
  display: flex;
  align-items: center;
  justify-content: center;
  width: 15px;
  height: 35%;
  margin-top: 25px;
  border: 1px solid #7fb0d8;
  border-radius: 2px;
  background: linear-gradient(90deg, #fff, #cdeafd 50%, #8cc8f0);
}

.thumb::after {
  content: '';
  width: 6px;
  height: 7px;
  background: repeating-linear-gradient(#4d86b5 0 1px, #e5f4ff 1px 2px);
}

.splitter {
  display: flex;
  align-items: center;
  width: 7px;
  margin-left: 3px;
  background: linear-gradient(90deg, #555, #999);
}

.splitter span {
  width: 7px;
  height: 48px;
  background: #d8d8d8;
}

.splitter span::after {
  content: '';
  display: block;
  width: 4px;
  margin: 20px 0 0 1px;
  border: 4px solid transparent;
  border-left: none;
  border-right-color: #fff;
}

/* status bar */
.statusbar {
  display: flex;
  flex: none;
  align-items: center;
  height: 24px;
  padding-left: 2px;
  border-top: 1px solid #aaa;
  background: #ebebeb;
}

.sbox {
  display: flex;
  align-items: center;
  justify-content: center;
  width: 18px;
  height: 18px;
  border: 1px solid #2348c8;
  background: #cfe0f8;
}

.sbox.white {
  background: #fff;
}

.program {
  flex: 1;
  margin-left: 6px;
}

.panel {
  display: flex;
  align-items: center;
  gap: 2px;
  padding-left: 1px;
  border-left: 1px solid #999;
}

.panel span {
  margin-left: 2px;
}

.schedule {
  width: 200px;
}

.memory {
  width: 121px;
}

/* taskbar */
.taskbar {
  display: flex;
  flex: none;
  align-items: center;
  height: 28px;
  padding-left: 11px;
  border-top: 1px solid #000;
  background: linear-gradient(#555, #333 13px, #0a0a0a 14px, #000 24px, #333);
  color: #fff;
}

.taskbar svg {
  display: block;
  flex: none;
}

.quick {
  display: flex;
  gap: 8px;
  margin: 0 91px 0 24px;
}

.tasks {
  display: flex;
  gap: 2px;
}

.tasks button {
  display: flex;
  align-items: center;
  gap: 4px;
  width: 158px;
  height: 23px;
  padding-left: 7px;
  border: 1px solid #999;
  border-radius: 3px;
  background: linear-gradient(#888, #4a4a4a 10px, #1a1a1a 11px, #111);
}

.tasks .current {
  padding-left: 10px;
  background: linear-gradient(#222, #3a3a3a 10px, #0a0a0a 11px, #111);
}

.tray {
  display: flex;
  flex: 1;
  align-items: center;
  justify-content: flex-end;
  gap: 2px;
  padding-right: 13px;
}

.lang {
  margin-right: 12px;
  padding: 1px 2px;
  background: #1c6a8c;
}

.chevron {
  margin-right: 4px;
}

.tray time {
  margin-left: 5px;
}
```
